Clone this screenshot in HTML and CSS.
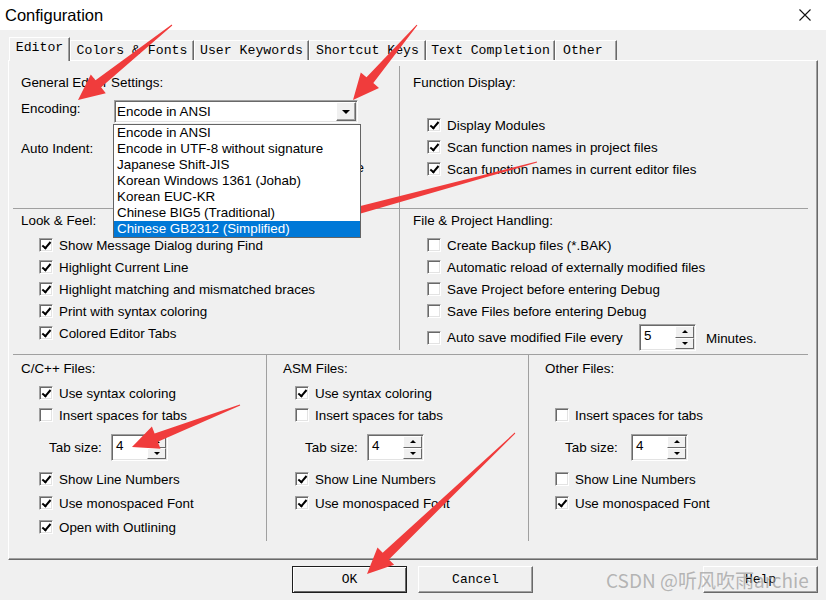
FILE: index.html
```html
<!DOCTYPE html>
<html lang="en">
<head>
    <meta charset="UTF-8">
    <meta name="viewport" content="width=device-width, initial-scale=1.0">
    <title>Configuration</title>
    <link rel="stylesheet" href="styles.css">
</head>
<body>
    <div class="titlebar">
        <span class="title">Configuration</span>
        <svg class="close" width="12" height="12" viewBox="0 0 12 12"><path d="M0.5 0.5 L11.5 11.5 M11.5 0.5 L0.5 11.5" stroke="#111" stroke-width="1.1" fill="none"/></svg>
    </div>

    <div class="tabs">
        <div class="tab active" style="width:61px">Editor</div>
        <div class="tab" style="width:124px">Colors &amp; Fonts</div>
        <div class="tab" style="width:115px">User Keywords</div>
        <div class="tab" style="width:117px">Shortcut Keys</div>
        <div class="tab" style="width:129px">Text Completion</div>
        <div class="tab tab-other" style="width:62px">Other</div>
    </div>

    <div class="panel">
        <div class="top">
            <div class="col-left">
                <div class="sec sec-general">
                    <div class="sec-title">General Editor Settings:</div>
                    <div class="enc-row">
                        <span class="enc-lbl">Encoding:</span>
                        <div class="combo">
                            <span class="combo-val">Encode in ANSI</span>
                            <span class="combo-btn"><i class="tri-down"></i></span>
                            <ul class="drop">
                                <li>Encode in ANSI</li>
                                <li>Encode in UTF-8 without signature</li>
                                <li>Japanese Shift-JIS</li>
                                <li>Korean Windows 1361 (Johab)</li>
                                <li>Korean EUC-KR</li>
                                <li>Chinese BIG5 (Traditional)</li>
                                <li class="sel">Chinese GB2312 (Simplified)</li>
                            </ul>
                        </div>
                    </div>
                    <div class="indent-row">Auto Indent:</div>
                    <div class="hidden-opt">Virtual Space</div>
                </div>
                <div class="sec sec-look">
                    <div class="sec-title">Look &amp; Feel:</div>
                    <div class="checks">
                        <div class="check"><span class="cb on"></span>Show Message Dialog during Find</div>
                        <div class="check"><span class="cb on"></span>Highlight Current Line</div>
                        <div class="check"><span class="cb on"></span>Highlight matching and mismatched braces</div>
                        <div class="check"><span class="cb on"></span>Print with syntax coloring</div>
                        <div class="check"><span class="cb on"></span>Colored Editor Tabs</div>
                    </div>
                </div>
            </div>
            <div class="col-right">
                <div class="sec sec-func">
                    <div class="sec-title">Function Display:</div>
                    <div class="checks checks-func">
                        <div class="check"><span class="cb on"></span>Display Modules</div>
                        <div class="check"><span class="cb on"></span>Scan function names in project files</div>
                        <div class="check"><span class="cb on"></span>Scan function names in current editor files</div>
                    </div>
                </div>
                <div class="sec sec-file">
                    <div class="sec-title">File &amp; Project Handling:</div>
                    <div class="checks">
                        <div class="check"><span class="cb"></span>Create Backup files (*.BAK)</div>
                        <div class="check"><span class="cb"></span>Automatic reload of externally modified files</div>
                        <div class="check"><span class="cb"></span>Save Project before entering Debug</div>
                        <div class="check"><span class="cb"></span>Save Files before entering Debug</div>
                        <div class="check check-auto">
                            <span class="cb"></span>
                            <span class="auto-lbl">Auto save modified File every</span>
                            <div class="spin">
                                <span class="spin-val">5</span>
                                <span class="spin-btns"><span class="sb"><i class="tri-up"></i></span><span class="sb"><i class="tri-dn"></i></span></span>
                            </div>
                            <span class="minutes">Minutes.</span>
                        </div>
                    </div>
                </div>
            </div>
        </div>

        <div class="bottom">
            <div class="fcol fcol-c">
                <div class="sec-title">C/C++ Files:</div>
                <div class="fbody">
                    <div class="check"><span class="cb on"></span>Use syntax coloring</div>
                    <div class="check"><span class="cb"></span>Insert spaces for tabs</div>
                    <div class="tabsize">
                        <span class="ts-lbl">Tab size:</span>
                        <div class="spin">
                            <span class="spin-val">4</span>
                            <span class="spin-btns"><span class="sb"><i class="tri-up"></i></span><span class="sb"><i class="tri-dn"></i></span></span>
                        </div>
                    </div>
                    <div class="check check-tall"><span class="cb on"></span>Show Line Numbers</div>
                    <div class="check check-tall"><span class="cb on"></span>Use monospaced Font</div>
                    <div class="check check-tall"><span class="cb on"></span>Open with Outlining</div>
                </div>
            </div>
            <div class="fcol fcol-asm">
                <div class="sec-title">ASM Files:</div>
                <div class="fbody">
                    <div class="check"><span class="cb on"></span>Use syntax coloring</div>
                    <div class="check"><span class="cb"></span>Insert spaces for tabs</div>
                    <div class="tabsize">
                        <span class="ts-lbl">Tab size:</span>
                        <div class="spin">
                            <span class="spin-val">4</span>
                            <span class="spin-btns"><span class="sb"><i class="tri-up"></i></span><span class="sb"><i class="tri-dn"></i></span></span>
                        </div>
                    </div>
                    <div class="check check-tall"><span class="cb on"></span>Show Line Numbers</div>
                    <div class="check check-tall"><span class="cb on"></span>Use monospaced Font</div>
                </div>
            </div>
            <div class="fcol fcol-other">
                <div class="sec-title">Other Files:</div>
                <div class="fbody">
                    <div class="check"></div>
                    <div class="check"><span class="cb"></span>Insert spaces for tabs</div>
                    <div class="tabsize">
                        <span class="ts-lbl">Tab size:</span>
                        <div class="spin">
                            <span class="spin-val">4</span>
                            <span class="spin-btns"><span class="sb"><i class="tri-up"></i></span><span class="sb"><i class="tri-dn"></i></span></span>
                        </div>
                    </div>
                    <div class="check check-tall"><span class="cb"></span>Show Line Numbers</div>
                    <div class="check check-tall"><span class="cb on"></span>Use monospaced Font</div>
                </div>
            </div>
        </div>
    </div>

    <div class="buttons">
        <button class="btn btn-default">OK</button>
        <button class="btn btn-cancel">Cancel</button>
        <button class="btn btn-help">Help</button>
    </div>

    <div class="watermark">CSDN @听风吹雨archie</div>

    <!-- red annotation arrows -->
    <svg class="marks" width="826" height="600" viewBox="0 0 826 600">
        <g fill="#f03c3c">
            <polygon points="171.7,24.6 95.5,80.3 90.8,74.4 78,100 105.8,93.2 101.1,87.3 172.3,25.4"/>
            <polygon points="416.6,24.7 366.5,77.3 360.8,72.4 353,100 379,88 373.3,83.1 417.4,25.3"/>
            <polygon points="536.9,161.5 316.9,216.9 315,209.6 293,228 321.2,232.8 319.3,225.5 537.1,162.5"/>
            <polygon points="239.8,404.5 154.6,433.4 151.9,426.4 132,447 160.5,448.8 157.8,441.8 240.2,405.5"/>
            <polygon points="514.7,432.6 382.7,552.8 377.5,547.4 367,574 394.1,564.8 388.9,559.4 515.3,433.4"/>
        </g>
    </svg>
</body>
</html>
```

FILE: styles.css
```css
* {
    box-sizing: border-box;
}
body {
    margin: 0;
    width: 826px;
    height: 600px;
    overflow: hidden;
    position: relative;
    background-color: #f0f0f0;
    font-family: "Liberation Sans", Arial, sans-serif;
    font-size: 13.4px;
    color: #000;
}

/* title bar */
.titlebar {
    height: 30px;
    background-color: #fff;
    display: flex;
    align-items: center;
    justify-content: space-between;
    padding: 0 15px 0 5px;
}
.title {
    font-size: 16.5px;
}

/* tab strip */
.tabs {
    height: 30px;
    display: flex;
    align-items: flex-end;
    padding-left: 9px;
    font-family: "Liberation Mono", "Courier New", monospace;
    font-size: 13.2px;
}
.tab {
    height: 20px;
    line-height: 19px;
    text-align: center;
    white-space: pre;
    border-top: 1px solid #fff;
    border-left: 1px solid #fff;
    border-right: 1px solid #696969;
    box-shadow: inset -1px 0 #a0a0a0;
}
.tab.active {
    height: 24px;
    margin-bottom: -1px;
    position: relative;
    z-index: 1;
    background-color: #f0f0f0;
}
.tab-other {
    text-align: left;
    padding-left: 7px;
}

/* main panel */
.panel {
    margin-left: 8px;
    width: 810px;
    height: 500px;
    border: 1px solid;
    border-color: #fff #696969 #696969 #fff;
    box-shadow: inset -1px -1px #a0a0a0;
    padding: 0 9px 0 4px;
}
.top {
    height: 293px;
    padding-top: 5px;
    display: flex;
}
.col-left {
    width: 387px;
    height: 284px;
    border-right: 1px solid #a0a0a0;
}
.col-right {
    width: 408px;
}
.sec-title {
    height: 16px;
    line-height: 16px;
}
.sec-general, .sec-func {
    height: 143px;
    border-bottom: 1px solid #a0a0a0;
    padding-top: 9px;
}
.sec-general, .sec-look {
    padding-left: 8px;
}
.sec-func, .sec-file {
    padding-left: 13px;
}
.sec-look, .sec-file {
    padding-top: 4px;
}

/* encoding combo */
.enc-row {
    display: flex;
    margin-top: 9px;
}
.enc-lbl {
    width: 93px;
    padding-top: 1px;
    line-height: 16px;
}
.combo {
    position: relative;
    width: 244px;
    height: 23px;
    display: flex;
    align-items: center;
    justify-content: space-between;
    background-color: #fff;
    border: 1px solid;
    border-color: #a0a0a0 #fff #fff #a0a0a0;
    box-shadow: inset 1px 1px #696969, inset -1px -1px #e3e3e3;
    padding-left: 2px;
}
.combo-btn {
    width: 20px;
    height: 19px;
    margin-right: 1px;
    display: flex;
    align-items: center;
    justify-content: center;
    background-color: #f0f0f0;
    border: 1px solid;
    border-color: #fff #696969 #696969 #fff;
    box-shadow: inset -1px -1px #a0a0a0;
}
.tri-down {
    border-left: 4px solid transparent;
    border-right: 4px solid transparent;
    border-top: 4px solid #000;
}
.drop {
    position: absolute;
    left: -2px;
    top: 23px;
    width: 248px;
    margin: 0;
    padding: 0;
    list-style: none;
    background-color: #fff;
    border: 1px solid #646464;
    z-index: 2;
}
.drop li {
    height: 16px;
    line-height: 16px;
    padding-left: 3px;
    white-space: nowrap;
}
.drop li.sel {
    background-color: #0078d7;
    color: #fff;
}
.indent-row {
    margin-top: 18px;
    line-height: 16px;
}
.hidden-opt {
    margin-top: 3px;
    width: 343px;
    line-height: 16px;
    text-align: right;
}

/* checkboxes */
.checks {
    margin-top: 5px;
    padding-left: 18px;
}
.checks-func {
    margin-top: 23px;
}
.sec-func .checks, .sec-file .checks {
    padding-left: 14px;
}
.check {
    height: 22px;
    display: flex;
    align-items: center;
    white-space: nowrap;
}
.check-tall {
    height: 24px;
}
.cb {
    position: relative;
    flex: none;
    width: 14px;
    height: 14px;
    margin-right: 6px;
    background-color: #fff;
    border: 1px solid;
    border-color: #a0a0a0 #fff #fff #a0a0a0;
    box-shadow: inset 1px 1px #696969, inset -1px -1px #e3e3e3;
}
.cb.on::after {
    content: "";
    position: absolute;
    left: 4px;
    top: 1px;
    width: 3px;
    height: 7px;
    border: solid #000;
    border-width: 0 2px 2px 0;
    transform: rotate(40deg);
}
.check-auto {
    height: 27px;
    margin-top: 2px;
}
.auto-lbl {
    width: 192px;
}
.minutes {
    margin-left: 10px;
    margin-top: 1px;
}

/* spinner */
.spin {
    width: 57px;
    height: 27px;
    display: flex;
    background-color: #fff;
    border: 1px solid;
    border-color: #a0a0a0 #fff #fff #a0a0a0;
    box-shadow: inset 1px 1px #696969, inset -1px -1px #e3e3e3;
    padding: 1px 1px 1px 2px;
}
.spin-val {
    flex: 1;
    line-height: 20px;
    padding-left: 2px;
}
.spin-btns {
    width: 19px;
    display: flex;
    flex-direction: column;
}
.sb {
    flex: 1;
    display: flex;
    align-items: center;
    justify-content: center;
    background-color: #f0f0f0;
    border: 1px solid;
    border-color: #fff #696969 #696969 #fff;
}
.tri-up {
    border-left: 3px solid transparent;
    border-right: 3px solid transparent;
    border-bottom: 3px solid #000;
}
.tri-dn {
    border-left: 3px solid transparent;
    border-right: 3px solid transparent;
    border-top: 3px solid #000;
}

/* file type columns */
.bottom {
    display: flex;
    border-top: 1px solid #a0a0a0;
}
.fcol {
    height: 186px;
    padding-top: 6px;
}
.fcol-c {
    width: 254px;
    border-right: 1px solid #a0a0a0;
    padding-left: 8px;
}
.fcol-asm {
    width: 262px;
    border-right: 1px solid #a0a0a0;
    padding-left: 16px;
}
.fcol-other {
    flex: 1;
    padding-left: 16px;
}
.fbody {
    margin-top: 5px;
}
.fcol-c .fbody {
    padding-left: 18px;
}
.fcol-asm .fbody {
    padding-left: 12px;
}
.fcol-other .fbody {
    padding-left: 10px;
}
.tabsize {
    display: flex;
    align-items: center;
    margin-top: 8px;
    margin-bottom: 6px;
}
.ts-lbl {
    width: 72px;
    padding-left: 10px;
}
.fcol-other .ts-lbl {
    width: 76px;
}

/* dialog buttons */
.buttons {
    display: flex;
    margin-top: 6px;
    padding-left: 292px;
}
.btn {
    width: 115px;
    height: 27px;
    padding: 0;
    font-family: "Liberation Mono", "Courier New", monospace;
    font-size: 13px;
    color: #000;
    background-color: #f0f0f0;
    border: 1px solid;
    border-color: #fff #696969 #696969 #fff;
    box-shadow: inset -1px -1px #a0a0a0;
}
.btn-default {
    border-color: #1e1e1e;
    box-shadow: inset 1px 1px #fff, inset -1px -1px #696969;
}
.btn-cancel {
    margin-left: 11px;
}
.btn-help {
    margin-left: 170px;
}

.watermark {
    position: absolute;
    left: 606px;
    top: 566px;
    font-family: "Noto Sans CJK SC", "Noto Sans", sans-serif;
    font-size: 19px;
    color: rgba(160, 160, 160, 0.75);
    white-space: nowrap;
}
.marks {
    position: absolute;
    left: 0;
    top: 0;
    pointer-events: none;
}
```
